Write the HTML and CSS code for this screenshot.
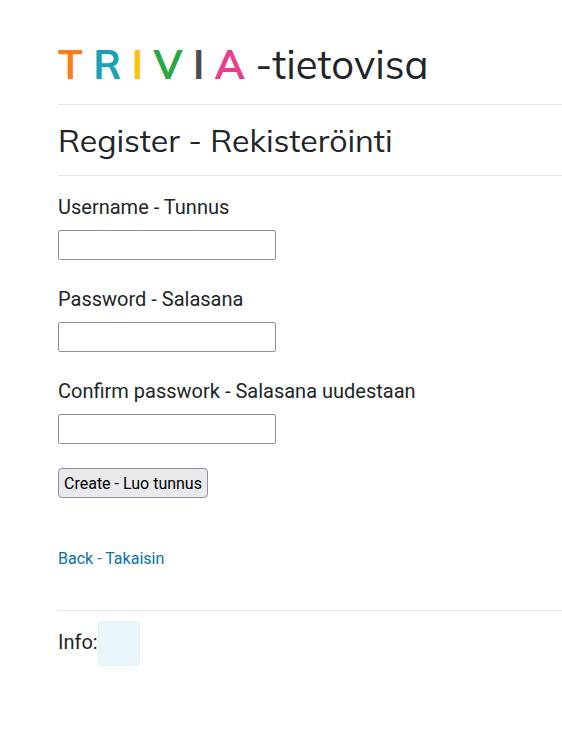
FILE: index.html
```html
<!DOCTYPE html>
<html lang="fi">
<head>
<meta charset="utf-8">
<meta name="viewport" content="width=device-width, initial-scale=1">
<title>TRIVIA - Register</title>
<link rel="stylesheet" href="styles.css">
</head>
<body>
<main class="page">
  <h1 class="brand"><span class="letter orange">T</span> <span class="letter teal">R</span> <span class="letter yellow">I</span> <span class="letter green">V</span> <span class="letter gray">I</span> <span class="letter pink">A</span> -tietovisa</h1>
  <hr>
  <h2 class="title">Register - Rekisteröinti</h2>
  <hr>
  <form class="form">
    <div class="field">
      <label for="username">Username - Tunnus</label>
      <input id="username" type="text">
    </div>
    <div class="field">
      <label for="password">Password - Salasana</label>
      <input id="password" type="password">
    </div>
    <div class="field">
      <label for="confirm">Confirm passwork - Salasana uudestaan</label>
      <input id="confirm" type="password">
    </div>
    <button class="create" type="button">Create - Luo tunnus</button>
  </form>
  <a class="back" href="#">Back - Takaisin</a>
  <hr>
  <div class="info">Info:<span class="badge"></span></div>
</main>
</body>
</html>
```
FILE: styles.css
```css
* {
  box-sizing: border-box;
}

body {
  margin: 0;
  background: #fff;
  color: #212529;
  font-family: Roboto, sans-serif;
  font-size: 16px;
  line-height: 24px;
}

.page {
  padding: 40px 0 40px 58px;
}

h1,
h2 {
  margin: 0;
  font-family: Muli, Mulish, "Nunito Sans", Nunito, sans-serif;
  font-weight: 400;
}

.brand {
  font-size: 40px;
  line-height: 48px;
}

.letter {
  font-weight: 700;
}

.orange { color: #fd7e14; }
.teal { color: #17a2b8; }
.yellow { color: #ffc107; }
.green { color: #28a745; }
.gray { color: #4f4a52; }
.pink { color: #e83e8c; }

.title {
  font-size: 32px;
  line-height: 38px;
}

hr {
  margin: 16px 0;
  border: 0;
  border-top: 1px solid rgba(0, 0, 0, 0.1);
}

.form {
  display: flex;
  flex-direction: column;
  align-items: flex-start;
  gap: 24px;
}

.field {
  display: flex;
  flex-direction: column;
  gap: 8px;
}

.field label {
  font-size: 20px;
  line-height: 30px;
}

.field input {
  width: 218px;
  height: 30px;
  padding: 1px 2px;
  border: 1px solid #8f8f9d;
  border-radius: 2px;
  background: #fff;
  font: inherit;
}

.create {
  height: 30px;
  padding: 2px 5px 0;
  border: 1px solid #8f8f9d;
  border-radius: 4px;
  background: #e9e9ed;
  color: #000;
  font: inherit;
}

.back {
  display: block;
  margin: 49px 0 39px;
  color: #0b71b0;
  text-decoration: none;
}

.info {
  display: flex;
  align-items: flex-start;
  margin-top: -6px;
  font-size: 20px;
  line-height: 42px;
}

.badge {
  width: 42px;
  height: 45px;
  border: 1px solid #e1f2f7;
  border-radius: 3px;
  background: #eaf6fb;
}
```
